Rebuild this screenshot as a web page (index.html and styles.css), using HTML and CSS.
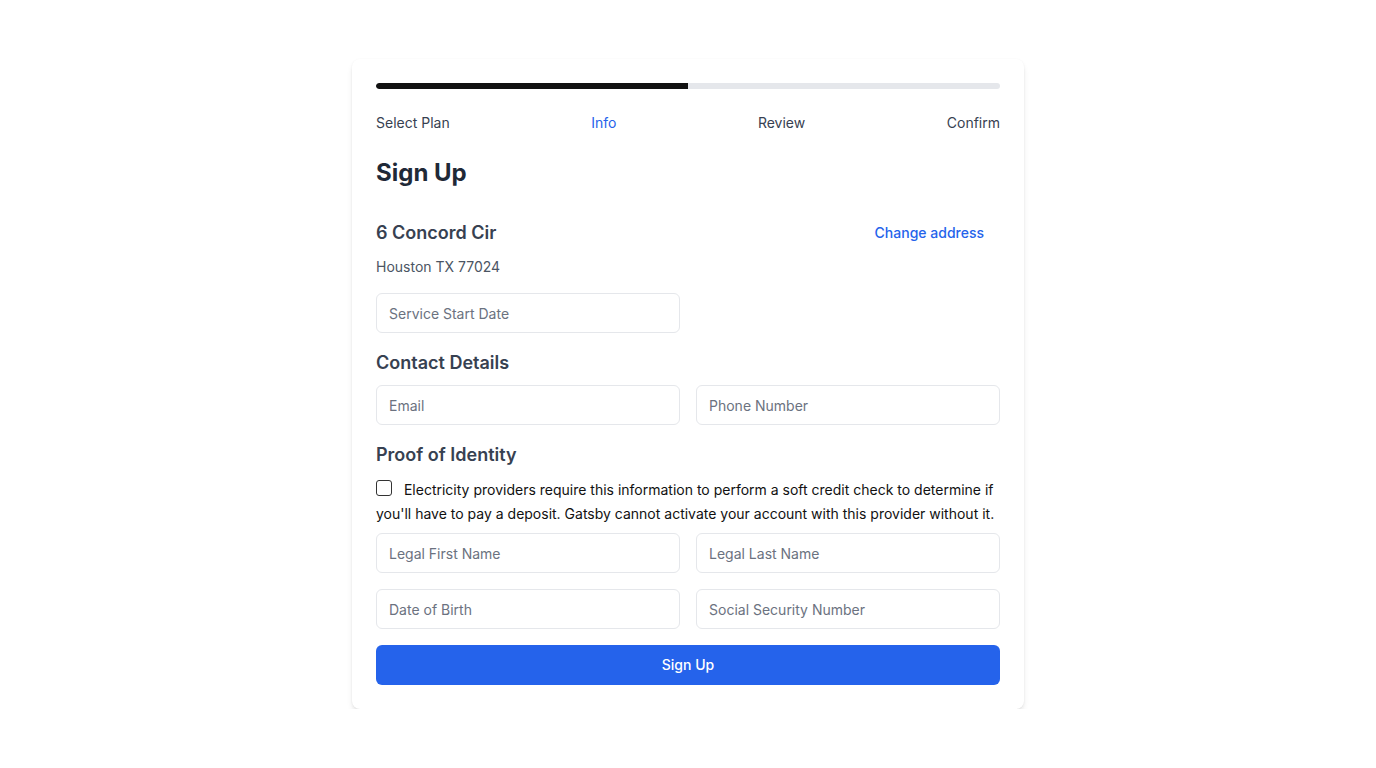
FILE: index.html
```html
<!DOCTYPE html>
<html lang="en">
<head>
<meta charset="utf-8">
<title>Sign Up</title>
<link rel="stylesheet" href="styles.css">
</head>
<body>
<main class="page">
  <section class="card">
    <div class="progress"><div class="progress-fill" style="width:50%"></div></div>
    <nav class="steps">
      <span class="step">Select Plan</span>
      <span class="step active">Info</span>
      <span class="step">Review</span>
      <span class="step">Confirm</span>
    </nav>
    <h1 class="title">Sign Up</h1>
    <div class="address-row">
      <h2 class="section-title">6 Concord Cir</h2>
      <a class="link" href="#">Change address</a>
    </div>
    <p class="city">Houston TX 77024</p>
    <div class="grid">
      <input class="field" type="text" placeholder="Service Start Date">
    </div>
    <h2 class="section-title gap">Contact Details</h2>
    <div class="grid">
      <input class="field" type="text" placeholder="Email">
      <input class="field" type="text" placeholder="Phone Number">
    </div>
    <h2 class="section-title gap">Proof of Identity</h2>
    <label class="consent"><input class="check" type="checkbox"> Electricity providers require this information to perform a soft credit check to determine if you'll have to pay a deposit. Gatsby cannot activate your account with this provider without it.</label>
    <div class="grid two-rows">
      <input class="field" type="text" placeholder="Legal First Name">
      <input class="field" type="text" placeholder="Legal Last Name">
      <input class="field" type="text" placeholder="Date of Birth">
      <input class="field" type="text" placeholder="Social Security Number">
    </div>
    <button class="submit" type="button">Sign Up</button>
  </section>
</main>
</body>
</html>
```

FILE: styles.css
```css
* { box-sizing: border-box; }
html, body { margin: 0; padding: 0; background: #ffffff; }
body { font-family: Inter, "Liberation Sans", sans-serif; color: #374151; }
.page { display: flex; justify-content: center; padding-top: 59px; }
.card {
  width: 672px;
  background: #fff;
  border-radius: 8px;
  box-shadow: 0 4px 6px -1px rgba(0,0,0,0.1), 0 2px 4px -2px rgba(0,0,0,0.1), 0 0 2px rgba(0,0,0,0.04);
  padding: 24px;
  display: flex;
  flex-direction: column;
}
.progress { height: 6px; background: #e5e7eb; border-radius: 9999px; overflow: hidden; }
.progress-fill { height: 100%; background: #111111; border-radius: 9999px 0 0 9999px; }
.steps { display: flex; justify-content: space-between; margin-top: 24px; font-size: 14px; line-height: 20px; color: #374151; }
.step.active { color: #2563eb; }
.title { margin: 24px 0 0; font-size: 24px; line-height: 32px; font-weight: 700; color: #1f2937; }
.address-row { display: flex; justify-content: space-between; align-items: center; margin-top: 30px; }
.section-title { margin: 0; font-size: 18px; line-height: 28px; font-weight: 600; color: #374151; }
.section-title.gap { margin-top: 16px; }
.link { color: #2563eb; font-size: 14px; line-height: 20px; font-weight: 500; text-decoration: none; padding: 0 16px; }
.city { margin: 10px 0 0; font-size: 14px; line-height: 20px; color: #4b5563; }
.city + .grid { margin-top: 16px; }
.grid { display: grid; grid-template-columns: 1fr 1fr; gap: 16px; margin-top: 8px; }
.field {
  height: 40px;
  border: 1px solid #e5e7eb;
  border-radius: 6px;
  padding: 0 12px;
  font-family: inherit;
  font-size: 14px;
  color: #111827;
  background: #fff;
  outline: none;
}
.field::placeholder { color: #6b7280; }
.consent { display: block; margin-top: 9px; font-size: 14px; line-height: 24px; color: #111111; }
.check {
  appearance: none;
  -webkit-appearance: none;
  width: 16px;
  height: 16px;
  margin: 0 8px 0 0;
  border: 1px solid #333;
  border-radius: 3px;
  vertical-align: -2px;
  position: relative;
  top: -1px;
  background: #fff;
}
.consent + .grid { margin-top: 7px; }
.submit {
  margin-top: 16px;
  height: 40px;
  border: none;
  border-radius: 6px;
  background: #2563eb;
  color: #fff;
  font-family: inherit;
  font-size: 14px;
  line-height: 20px;
  font-weight: 500;
  padding: 0 0 1px;
}
```
